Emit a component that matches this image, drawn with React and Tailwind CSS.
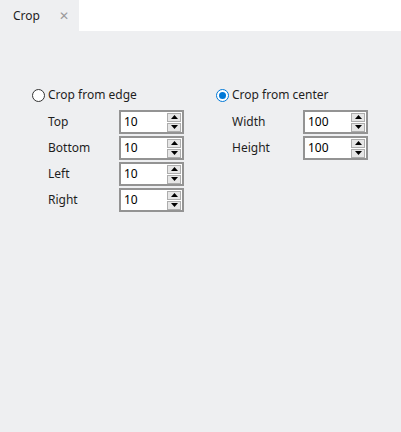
import React from 'react'

function Spinner({ value }) {
  return (
    <div className="flex items-center w-[65px] h-[24px] border-2 border-[#939393] bg-white">
      <span className="flex-1 pl-[3px] text-[12px] leading-none text-[#000]">{value}</span>
      <div className="flex flex-col gap-[1px] mr-[1px]">
        <div className="w-[14px] h-[9px] bg-[#e6e6e6] border border-[#adadad] flex items-center justify-center">
          <svg width="7" height="4" viewBox="0 0 7 4"><path d="M3.5 0 L7 4 L0 4 Z" fill="#000" /></svg>
        </div>
        <div className="w-[14px] h-[9px] bg-[#e6e6e6] border border-[#adadad] flex items-center justify-center">
          <svg width="7" height="4" viewBox="0 0 7 4"><path d="M0 0 L7 0 L3.5 4 Z" fill="#000" /></svg>
        </div>
      </div>
    </div>
  )
}

function Row({ label, value }) {
  return (
    <div className="flex items-center">
      <span className="w-[71px] pl-[16px] box-content text-[12px] text-[#1e1e1e]">{label}</span>
      <Spinner value={value} />
    </div>
  )
}

function Radio({ checked, label }) {
  return (
    <div className="flex items-center gap-[3px] h-[16px]">
      {checked ? (
        <span className="w-[13px] h-[13px] rounded-full border border-[#0078d7] bg-white flex items-center justify-center">
          <span className="w-[7px] h-[7px] rounded-full bg-[#0078d7]" />
        </span>
      ) : (
        <span className="w-[13px] h-[13px] rounded-full border border-[#333] bg-white" />
      )}
      <span className="text-[12px] text-[#1e1e1e]">{label}</span>
    </div>
  )
}

export default function App() {
  return (
    <div className="w-[401px] h-[432px] flex flex-col bg-white" style={{ fontFamily: '"Noto Sans", "Open Sans", sans-serif' }}>
      <div className="flex h-[31px] shrink-0">
        <div className="w-[79px] bg-[#eeeff1] flex items-center justify-between pl-[13px] pr-[10px]">
          <span className="text-[12px] text-[#1e1e1e]">Crop</span>
          <span className="text-[12px] text-[#9a9a9a]">✕</span>
        </div>
        <div className="flex-1 bg-white" />
      </div>
      <div className="flex-1 bg-[#eeeff1] pt-[56px] pl-[32px] flex">
        <div className="w-[184px] flex flex-col">
          <Radio label="Crop from edge" />
          <div className="flex flex-col gap-[2px] mt-[7px]">
            <Row label="Top" value="10" />
            <Row label="Bottom" value="10" />
            <Row label="Left" value="10" />
            <Row label="Right" value="10" />
          </div>
        </div>
        <div className="flex flex-col">
          <Radio checked label="Crop from center" />
          <div className="flex flex-col gap-[2px] mt-[7px]">
            <Row label="Width" value="100" />
            <Row label="Height" value="100" />
          </div>
        </div>
      </div>
    </div>
  )
}
